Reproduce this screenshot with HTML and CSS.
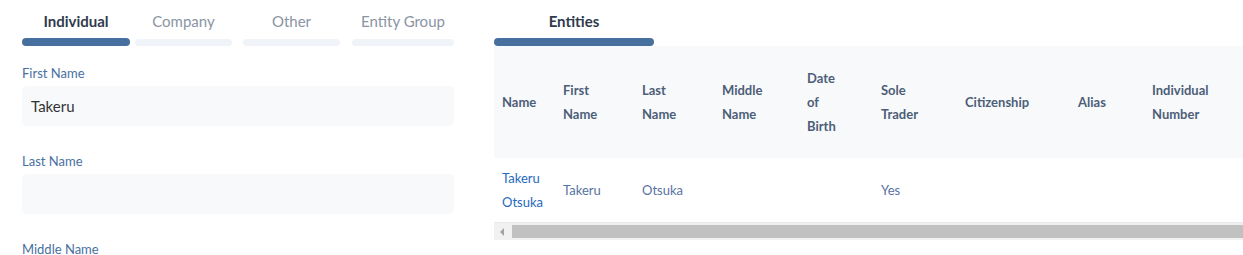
FILE: index.html
```html
<!DOCTYPE html>
<html lang="en">

<head>
  <meta charset="UTF-8" />
  <meta name="viewport" content="width=device-width, initial-scale=1.0" />
  <title>Entity Details</title>
  <link rel="stylesheet" href="styles.css">
</head>

<body>
  <div class="page">
    <div class="form-panel">
      <div class="tabs">
        <div class="tab active tab-individual">Individual</div>
        <div class="tab tab-company">Company</div>
        <div class="tab tab-other">Other</div>
        <div class="tab tab-group">Entity Group</div>
      </div>
      <div class="field">
        <label>First Name</label>
        <div class="input">Takeru</div>
      </div>
      <div class="field">
        <label>Last Name</label>
        <div class="input"></div>
      </div>
      <div class="field">
        <label>Middle Name</label>
        <div class="input"></div>
      </div>
    </div>

    <div class="list-panel">
      <div class="tabs">
        <div class="tab active tab-entities">Entities</div>
      </div>
      <div class="table-wrap">
        <table class="entities">
          <colgroup>
            <col style="width: 61px">
            <col style="width: 79px">
            <col style="width: 80px">
            <col style="width: 85px">
            <col style="width: 74px">
            <col style="width: 84px">
            <col style="width: 113px">
            <col style="width: 74px">
            <col style="width: 120px">
          </colgroup>
          <thead>
            <tr>
              <th>Name</th>
              <th>First<br>Name</th>
              <th>Last<br>Name</th>
              <th>Middle<br>Name</th>
              <th>Date<br>of<br>Birth</th>
              <th>Sole<br>Trader</th>
              <th>Citizenship</th>
              <th>Alias</th>
              <th>Individual<br>Number</th>
            </tr>
          </thead>
          <tbody>
            <tr>
              <td><a href="#">Takeru<br>Otsuka</a></td>
              <td>Takeru</td>
              <td>Otsuka</td>
              <td></td>
              <td></td>
              <td>Yes</td>
              <td></td>
              <td></td>
              <td></td>
            </tr>
          </tbody>
        </table>
        <div class="scrollbar">
          <span class="arrow"></span>
          <div class="thumb"></div>
        </div>
      </div>
    </div>
  </div>
</body>

</html>
```

FILE: styles.css
```css
body {
  margin: 0;
  font-family: Lato, "Open Sans", sans-serif;
  background: #fff;
  height: 255px;
  overflow: hidden;
}
.page {
  display: flex;
  gap: 40px;
  padding-left: 22px;
}
.form-panel {
  width: 432px;
  flex-shrink: 0;
}
.list-panel {
  flex: 1;
  min-width: 0;
  overflow: hidden;
}
.tabs {
  display: flex;
  height: 46px;
}
.tab {
  font-size: 15px;
  color: #8a94a3;
  text-align: center;
  line-height: 22px;
  padding-top: 10px;
  box-sizing: border-box;
  height: 46px;
  display: flex;
  flex-direction: column;
}
.tab::after {
  content: "";
  display: block;
  height: 7px;
  margin-top: auto;
  border-radius: 4px;
  background: #f0f3f7;
}
.tab.active {
  color: #2f3b4d;
  font-weight: bold;
}
.tab.active::after {
  height: 8px;
  background: #47709f;
}
.tab-individual { width: 108px; }
.tab-company { width: 97px; margin-left: 5px; }
.tab-other { width: 97px; margin-left: 11px; }
.tab-group { width: 102px; margin-left: 12px; }
.tab-entities { width: 160px; }

.field {
  margin-top: 17px;
}
.field + .field {
  margin-top: 25px;
}
.field label {
  display: block;
  font-size: 13px;
  color: #47709f;
  line-height: 20px;
  margin-bottom: 3px;
}
.input {
  height: 40px;
  background: #f7f9fb;
  border-radius: 5px;
  font-size: 15px;
  color: #333;
  line-height: 40px;
  padding-left: 9px;
}

.table-wrap {
  width: 770px;
}
.entities {
  border-collapse: collapse;
  table-layout: fixed;
  width: 770px;
  font-size: 13px;
}
.entities th {
  background: #f7f9fb;
  color: #4d5e78;
  font-weight: bold;
  text-align: left;
  line-height: 24px;
  padding: 20px 8px;
  vertical-align: middle;
}
.entities td {
  color: #5872a3;
  line-height: 24px;
  padding: 8px 8px;
  height: 48px;
  vertical-align: middle;
  border-bottom: 1px solid #e6e8ee;
}
.entities a {
  color: #2469c0;
  text-decoration: none;
}
.scrollbar {
  display: flex;
  align-items: center;
  height: 17px;
  background: #f1f1f1;
}
.arrow {
  width: 0;
  height: 0;
  border-top: 4px solid transparent;
  border-bottom: 4px solid transparent;
  border-right: 4px solid #a3a3a3;
  margin: 0 8px 0 6px;
}
.thumb {
  flex: 1;
  height: 13px;
  background: #c1c1c1;
}
```
